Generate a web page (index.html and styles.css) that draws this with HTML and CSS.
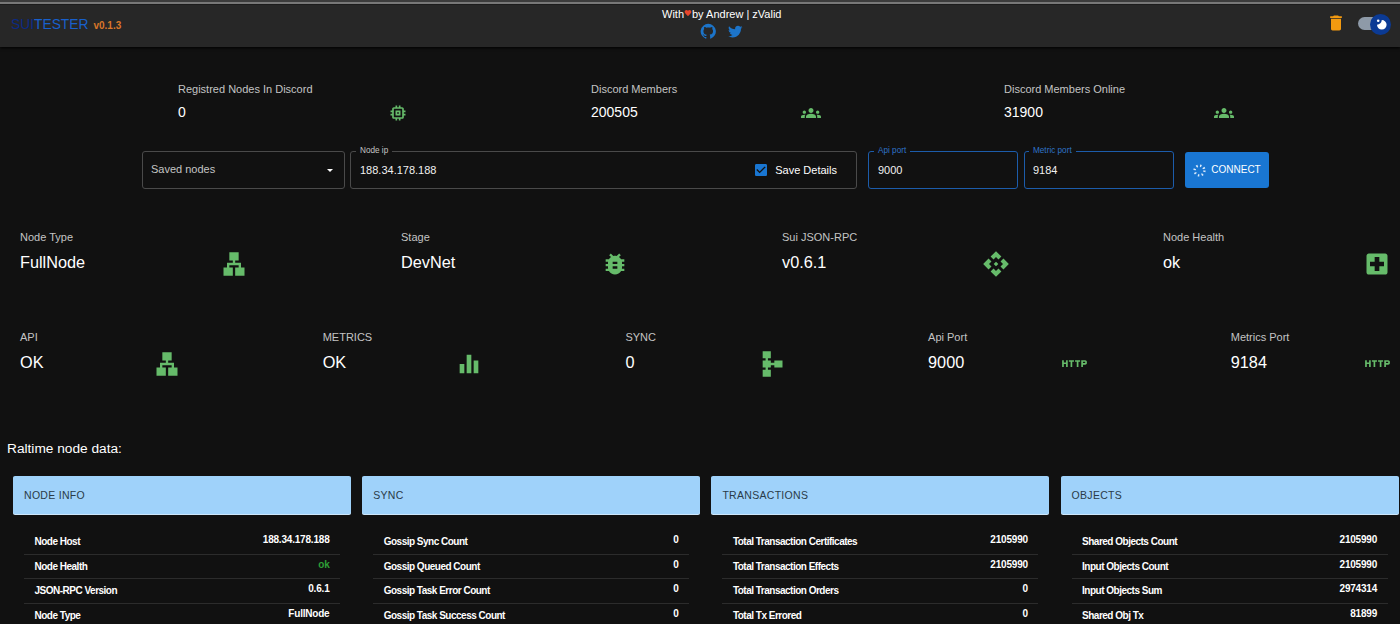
FILE: index.html
```html
<!DOCTYPE html>
<html lang="en">
<head>
<meta charset="utf-8">
<title>SuiTester</title>
<link rel="stylesheet" href="styles.css">
</head>
<body>
<svg class="defs" width="0" height="0" aria-hidden="true">
  <symbol id="i-memory" viewBox="0 0 24 24"><path d="M15 9H9v6h6V9zm-2 4h-2v-2h2v2zm8-2V9h-2V7c0-1.1-.9-2-2-2h-2V3h-2v2h-2V3H9v2H7c-1.1 0-2 .9-2 2v2H3v2h2v2H3v2h2v2c0 1.1.9 2 2 2h2v2h2v-2h2v2h2v-2h2c1.1 0 2-.9 2-2v-2h2v-2h-2v-2h2zm-4 6H7V7h10v10z"/></symbol>
  <symbol id="i-groups" viewBox="0 0 24 24"><path d="M12 12.75c1.63 0 3.07.39 4.24.9 1.08.48 1.76 1.56 1.76 2.73V18H6v-1.61c0-1.18.68-2.26 1.76-2.73 1.17-.52 2.61-.91 4.24-.91zM4 13c1.1 0 2-.9 2-2s-.9-2-2-2-2 .9-2 2 .9 2 2 2zm1.13 1.1c-.37-.06-.74-.1-1.13-.1-.99 0-1.93.21-2.78.58C.48 14.9 0 15.62 0 16.43V18h4.5v-1.61c0-.83.23-1.61.63-2.29zM20 13c1.1 0 2-.9 2-2s-.9-2-2-2-2 .9-2 2 .9 2 2 2zm4 3.43c0-.81-.48-1.53-1.22-1.85-.85-.37-1.79-.58-2.78-.58-.39 0-.76.04-1.13.1.4.68.63 1.46.63 2.29V18H24v-1.57zM12 6c1.66 0 3 1.34 3 3s-1.34 3-3 3-3-1.34-3-3 1.34-3 3-3z"/></symbol>
  <symbol id="i-lan" viewBox="0 0 24 24"><path d="M13 22h8v-7h-3v-4h-5V9h3V2H8v7h3v2H6v4H3v7h8v-7H8v-2h8v2h-3z"/></symbol>
  <symbol id="i-bug" viewBox="0 0 24 24"><path d="M20 8h-2.81c-.45-.78-1.07-1.45-1.82-1.96L17 4.41 15.59 3l-2.17 2.17C12.96 5.06 12.49 5 12 5c-.49 0-.96.06-1.41.17L8.41 3 7 4.41l1.62 1.63C7.88 6.55 7.26 7.22 6.81 8H4v2h2.09c-.05.33-.09.66-.09 1v1H4v2h2v1c0 .34.04.67.09 1H4v2h2.81c1.04 1.79 2.97 3 5.19 3s4.15-1.21 5.19-3H20v-2h-2.09c.05-.33.09-.66.09-1v-1h2v-2h-2v-1c0-.34-.04-.67-.09-1H20V8zm-6 8h-4v-2h4v2zm0-4h-4v-2h4v2z"/></symbol>
  <symbol id="i-api" viewBox="0 0 24 24"><path d="M14 12l-2 2-2-2 2-2 2 2zm-2-6l2.12 2.12 2.5-2.5L12 1 7.38 5.62l2.5 2.5L12 6zm-6 6l2.12-2.12-2.5-2.5L1 12l4.62 4.62 2.5-2.5L6 12zm12 0l-2.12 2.12 2.5 2.5L23 12l-4.62-4.62-2.5 2.5L18 12zm-6 6l-2.12-2.12-2.5 2.5L12 23l4.62-4.62-2.5-2.5L12 18z"/></symbol>
  <symbol id="i-hospital" viewBox="0 0 24 24"><path d="M19 3H5c-1.1 0-1.99.9-1.99 2L3 19c0 1.1.9 2 2 2h14c1.1 0 2-.9 2-2V5c0-1.1-.9-2-2-2zm-1 11h-4v4h-4v-4H6v-4h4V6h4v4h4v4z"/></symbol>
  <symbol id="i-bars" viewBox="0 0 24 24"><path d="M10 20h4V4h-4v16zm-6 0h4v-8H4v8zM16 9v11h4V9h-4z"/></symbol>
  <symbol id="i-schema" viewBox="0 0 24 24"><path d="M14 9v2h-3V9H8.500V7H11V1H4v6h2.500v2H4v6h2.500v2H4v6h7v-6H8.500v-2H11v-2h3v2h7V9h-7z"/></symbol>
  <symbol id="i-http" viewBox="0 0 24 24"><path d="M4.500 11h-2V9H1v6h1.500v-2.500h2V15H6V9H4.500v2zm2.500-.5h1.500V15H10v-4.500h1.500V9H7v1.500zm5.500 0H14V15h1.500v-4.500H17V9h-4.500v1.500zm9-1.500H18v6h1.500v-2h2c.8 0 1.500-.7 1.500-1.500v-1c0-.8-.7-1.500-1.500-1.500zm0 2.500h-2v-1h2v1z"/></symbol>
</svg>

<header class="topbar">
  <div class="brand"><span class="brand-sui">SUI</span><span class="brand-tester">TESTER</span><span class="brand-ver">v0.1.3</span></div>
  <div class="credit">
    <div class="credit-line">With<svg class="heart" viewBox="0 0 24 24"><path d="M12 21.350l-1.450-1.320C5.400 15.360 2 12.280 2 8.500 2 5.420 4.420 3 7.500 3c1.740 0 3.410.81 4.500 2.090C13.090 3.810 14.760 3 16.500 3 19.580 3 22 5.420 22 8.500c0 3.780-3.400 6.860-8.550 11.540L12 21.350z"/></svg>by Andrew | zValid</div>
    <div class="credit-icons">
      <svg class="social" viewBox="0 0 24 24"><path d="M12 1.270a11 11 0 00-3.480 21.460c.55.090.73-.28.730-.55v-1.840c-3.030.64-3.670-1.460-3.670-1.460-.55-1.290-1.280-1.650-1.280-1.650-.92-.65.100-.65.100-.65 1.100 0 1.730 1.100 1.730 1.100.92 1.650 2.570 1.200 3.210.92a2 2 0 01.640-1.470c-2.470-.27-5.040-1.190-5.040-5.500 0-1.100.46-2.100 1.200-2.840a3.760 3.760 0 010-2.930s.91-.28 3.110 1.100c1.800-.49 3.700-.49 5.500 0 2.100-1.380 3.020-1.100 3.020-1.100a3.760 3.760 0 010 2.930c.83.74 1.200 1.740 1.200 2.940 0 4.210-2.570 5.130-5.040 5.400.45.37.82.92.82 2.020v3.030c0 .27.100.64.730.55A11 11 0 0012 1.270"/></svg>
      <svg class="social" viewBox="0 0 24 24"><path d="M22.460 6c-.77.350-1.600.580-2.460.69.880-.530 1.560-1.370 1.880-2.380-.830.500-1.750.850-2.720 1.050C18.370 4.500 17.260 4 16 4c-2.350 0-4.270 1.920-4.270 4.290 0 .340.040.670.110.980C8.280 9.090 5.110 7.380 3 4.790c-.370.630-.580 1.370-.580 2.150 0 1.490.750 2.810 1.910 3.560-.710 0-1.370-.200-1.950-.500v.030c0 2.080 1.480 3.820 3.440 4.210a4.220 4.220 0 0 1-1.930.070 4.280 4.280 0 0 0 4 2.980 8.521 8.521 0 0 1-5.330 1.840c-.340 0-.680-.020-1.020-.060C3.440 20.290 5.700 21 8.120 21 16 21 20.310 14.460 20.310 8.790c0-.190 0-.370-.010-.560.840-.600 1.560-1.360 2.160-2.230z"/></svg>
    </div>
  </div>
  <div class="actions">
    <svg class="trash" viewBox="0 0 24 24"><path d="M6 19c0 1.100.9 2 2 2h8c1.100 0 2-.9 2-2V7H6v12zM19 4h-3.500l-1-1h-5l-1 1H5v2h14V4z"/></svg>
    <div class="toggle">
      <span class="toggle-thumb">
        <svg class="moon" viewBox="0 0 20 20"><path d="M11 5A6 6 0 1 1 5 11A7 7 0 0 0 11 5z"/><circle cx="6.500" cy="6" r="1.600"/></svg>
      </span>
    </div>
  </div>
</header>

<main>
  <section class="stats stats-top">
    <div class="stat"><div class="stat-text"><div class="stat-label">Registred Nodes In Discord</div><div class="stat-value">0</div></div><svg class="stat-icon"><use href="#i-memory"/></svg></div>
    <div class="stat"><div class="stat-text"><div class="stat-label">Discord Members</div><div class="stat-value">200505</div></div><svg class="stat-icon"><use href="#i-groups"/></svg></div>
    <div class="stat"><div class="stat-text"><div class="stat-label">Discord Members Online</div><div class="stat-value">31900</div></div><svg class="stat-icon"><use href="#i-groups"/></svg></div>
  </section>

  <section class="connect">
    <div class="field field-select"><span class="select-text">Saved nodes</span><span class="caret"></span></div>
    <div class="field field-ip">
      <span class="legend">Node ip</span>
      <span class="field-value">188.34.178.188</span>
      <span class="save"><svg class="check" viewBox="0 0 24 24"><path d="M19 3H5c-1.110 0-2 .9-2 2v14c0 1.100.89 2 2 2h14c1.110 0 2-.9 2-2V5c0-1.100-.89-2-2-2zm-9 14l-5-5 1.410-1.410L10 14.170l7.590-7.590L19 8l-9 9z"/></svg>Save Details</span>
    </div>
    <div class="field field-port"><span class="legend legend-blue">Api port</span><span class="field-value">9000</span></div>
    <div class="field field-port"><span class="legend legend-blue">Metric port</span><span class="field-value">9184</span></div>
    <button class="connect-btn"><svg class="spin" viewBox="0 0 16 16"><circle cx="8" cy="8" r="6"/></svg><span class="btn-text">CONNECT</span></button>
  </section>

  <section class="stats stats-four">
    <div class="stat"><div class="stat-text"><div class="stat-label">Node Type</div><div class="stat-value">FullNode</div></div><svg class="stat-icon"><use href="#i-lan"/></svg></div>
    <div class="stat"><div class="stat-text"><div class="stat-label">Stage</div><div class="stat-value">DevNet</div></div><svg class="stat-icon"><use href="#i-bug"/></svg></div>
    <div class="stat"><div class="stat-text"><div class="stat-label">Sui JSON-RPC</div><div class="stat-value">v0.6.1</div></div><svg class="stat-icon"><use href="#i-api"/></svg></div>
    <div class="stat"><div class="stat-text"><div class="stat-label">Node Health</div><div class="stat-value">ok</div></div><svg class="stat-icon"><use href="#i-hospital"/></svg></div>
  </section>

  <section class="stats stats-five">
    <div class="stat"><div class="stat-text"><div class="stat-label">API</div><div class="stat-value">OK</div></div><svg class="stat-icon"><use href="#i-lan"/></svg></div>
    <div class="stat"><div class="stat-text"><div class="stat-label">METRICS</div><div class="stat-value">OK</div></div><svg class="stat-icon"><use href="#i-bars"/></svg></div>
    <div class="stat"><div class="stat-text"><div class="stat-label">SYNC</div><div class="stat-value">0</div></div><svg class="stat-icon"><use href="#i-schema"/></svg></div>
    <div class="stat"><div class="stat-text"><div class="stat-label">Api Port</div><div class="stat-value">9000</div></div><svg class="stat-icon stat-http"><use href="#i-http"/></svg></div>
    <div class="stat"><div class="stat-text"><div class="stat-label">Metrics Port</div><div class="stat-value">9184</div></div><svg class="stat-icon stat-http"><use href="#i-http"/></svg></div>
  </section>

  <h2 class="section-title">Raltime node data:</h2>

  <section class="tables">
    <article class="panel">
      <div class="panel-head">NODE INFO</div>
      <div class="rows">
        <div class="row"><span>Node Host</span><b>188.34.178.188</b></div>
        <div class="row"><span>Node Health</span><b class="ok">ok</b></div>
        <div class="row"><span>JSON-RPC Version</span><b>0.6.1</b></div>
        <div class="row"><span>Node Type</span><b>FullNode</b></div>
      </div>
    </article>
    <article class="panel">
      <div class="panel-head">SYNC</div>
      <div class="rows">
        <div class="row"><span>Gossip Sync Count</span><b>0</b></div>
        <div class="row"><span>Gossip Queued Count</span><b>0</b></div>
        <div class="row"><span>Gossip Task Error Count</span><b>0</b></div>
        <div class="row"><span>Gossip Task Success Count</span><b>0</b></div>
      </div>
    </article>
    <article class="panel">
      <div class="panel-head">TRANSACTIONS</div>
      <div class="rows">
        <div class="row"><span>Total Transaction Certificates</span><b>2105990</b></div>
        <div class="row"><span>Total Transaction Effects</span><b>2105990</b></div>
        <div class="row"><span>Total Transaction Orders</span><b>0</b></div>
        <div class="row"><span>Total Tx Errored</span><b>0</b></div>
      </div>
    </article>
    <article class="panel">
      <div class="panel-head">OBJECTS</div>
      <div class="rows">
        <div class="row"><span>Shared Objects Count</span><b>2105990</b></div>
        <div class="row"><span>Input Objects Count</span><b>2105990</b></div>
        <div class="row"><span>Input Objects Sum</span><b>2974314</b></div>
        <div class="row"><span>Shared Obj Tx</span><b>81899</b></div>
      </div>
    </article>
  </section>
</main>
</body>
</html>
```
FILE: styles.css
```css
* { box-sizing: border-box; }
html, body { margin: 0; height: 624px; overflow: hidden; }
body { background: #111111; color: #fff; font-family: "Liberation Sans", Arial, sans-serif; }
.defs { position: absolute; }

.topbar { height: 47px; background: #272727; border-top: 2px solid #3c3c3c; box-shadow: inset 0 2px 0 #787878, inset 0 3px 0 #1c1c1c, 0 1px 3px #000; display: grid; grid-template-columns: 651px auto 1fr; align-items: start; padding: 0 11px 0 11px; }
.brand { margin-top: 14px; display: flex; align-items: baseline; font-size: 13.800px; line-height: 17px; }
.brand-sui { color: #0b2a85; }
.brand-tester { color: #1860cc; }
.brand-ver { color: #d9762a; font-size: 10px; font-weight: bold; margin-left: 5px; }
.credit { text-align: center; padding-top: 6px; }
.credit-line { font-size: 11px; line-height: 13px; display: flex; justify-content: center; }
.heart { width: 8px; height: 8px; fill: #e8452c; margin: 1px 0 0 0; }
.credit-icons { display: flex; justify-content: center; gap: 10px; margin-top: 2px; }
.social { width: 16.500px; height: 16.500px; fill: #1c74c9; }
.actions { justify-self: end; display: flex; align-items: center; gap: 12px; margin-top: 11px; }
.trash { width: 20px; height: 20px; fill: #f39a10; }
.toggle { width: 31px; height: 13px; border-radius: 7px; background: #8e9aa8; position: relative; }
.toggle-thumb { position: absolute; right: -2px; top: -3px; width: 21px; height: 21px; border-radius: 50%; background: #0b3a94; display: flex; align-items: center; justify-content: center; }
.moon { width: 16px; height: 16px; fill: #fff; }

.stats { display: grid; }
.stat { display: flex; align-items: flex-start; }
.stat-label { color: #c4c4c4; font-size: 11px; line-height: 14px; white-space: nowrap; }
.stat-value { font-size: 14px; line-height: 17px; margin-top: 8px; }
.stat-icon { fill: #66bb6a; flex: none; }

.stats-top { grid-template-columns: repeat(2, 413px) 1fr; padding: 34.500px 0 0 178px; }
.stats-top .stat-text { width: 209.500px; }
.stats-top .stat-icon { width: 20px; height: 20px; margin-top: 21px; }

.connect { display: flex; margin: 28.500px 0 0 142px; gap: 5px; align-items: flex-start; height: 38px; }
.field { position: relative; height: 38px; border: 1px solid #4a4a4a; border-radius: 3px; display: flex; align-items: center; font-size: 11px; }
.field-select { width: 203px; padding: 0 9px 2px 8px; justify-content: space-between; color: #c4c4c4; }
.caret { width: 0; height: 0; border-left: 3px solid transparent; border-right: 3px solid transparent; border-top: 3px solid #fff; margin: 2px 2px 0 0; }
.field-ip { width: 507px; padding: 0 19px 0 9px; justify-content: space-between; margin-right: 6px; }
.field-port { width: 150px; padding: 0 9px; border-color: #1c5cab; }
.field-port + .field-port { margin-left: 1px; padding-left: 8px; }
.field-value { color: #f0f0f0; }
.legend { position: absolute; top: -6px; left: 5px; padding: 0 4px; font-size: 8.200px; line-height: 10px; background: #111111; color: #c4c4c4; }
.field-port + .field-port .legend { left: 4px; }
.legend-blue { color: #2f74c8; }
.save { display: flex; align-items: center; gap: 6px; }
.check { width: 16px; height: 16px; fill: #1976d2; }
.connect-btn { height: 36px; width: 84px; margin-left: 6px; margin-top: 1px; background: #1976d2; color: #fff; border: 0; border-radius: 3px; font: 10px "Liberation Sans", Arial, sans-serif; display: flex; align-items: center; justify-content: center; gap: 5px; padding: 0; }
.btn-text { position: relative; top: -1px; }
.spin { width: 13px; height: 13px; fill: none; stroke: #dcebfb; stroke-width: 3; stroke-dasharray: 1.800 2.900; }

.stats-four { grid-template-columns: repeat(3, 381px) 1fr; padding: 40.500px 0 0 20px; }
.stats-four .stat-text { width: 200px; }
.stats-four .stat-value, .stats-five .stat-value { font-size: 16.300px; line-height: 21px; margin-top: 8px; }
.stats-four .stat-icon, .stats-five .stat-icon { width: 28px; height: 28px; margin-top: 20px; }

.stats-five { grid-template-columns: repeat(4, 302.700px) 1fr; padding: 52.500px 0 0 20px; }
.stats-five .stat-text { width: 132.500px; }
.stats-five .stat-http { width: 27px; height: 27px; margin-left: .500px; }

.section-title { margin: 62px 0 0 7px; font-size: 13.700px; line-height: 18px; font-weight: normal; }

.tables { display: grid; grid-template-columns: repeat(4, 338px); column-gap: 11.200px; padding: 18px 0 0 13px; }
.panel-head { height: 38px; background: #9fd2fa; color: #2a3b48; font-size: 10.500px; letter-spacing: .3px; padding: 0 11px; display: flex; align-items: center; border-radius: 2px; box-shadow: 0 1px 0 #cde7fb; }
.rows { padding: 16px 11px 0; }
.row { height: 24.500px; display: flex; justify-content: space-between; padding: 0 10.500px; border-bottom: 1px solid #2c2c2c; font-size: 10px; font-weight: bold; align-items: center; }
.row:last-child { border-bottom: 0; }
.row span { letter-spacing: -.5px; }
.row b { position: relative; top: -2px; letter-spacing: -.2px; }
.row .ok { color: #2e9e36; }
```
